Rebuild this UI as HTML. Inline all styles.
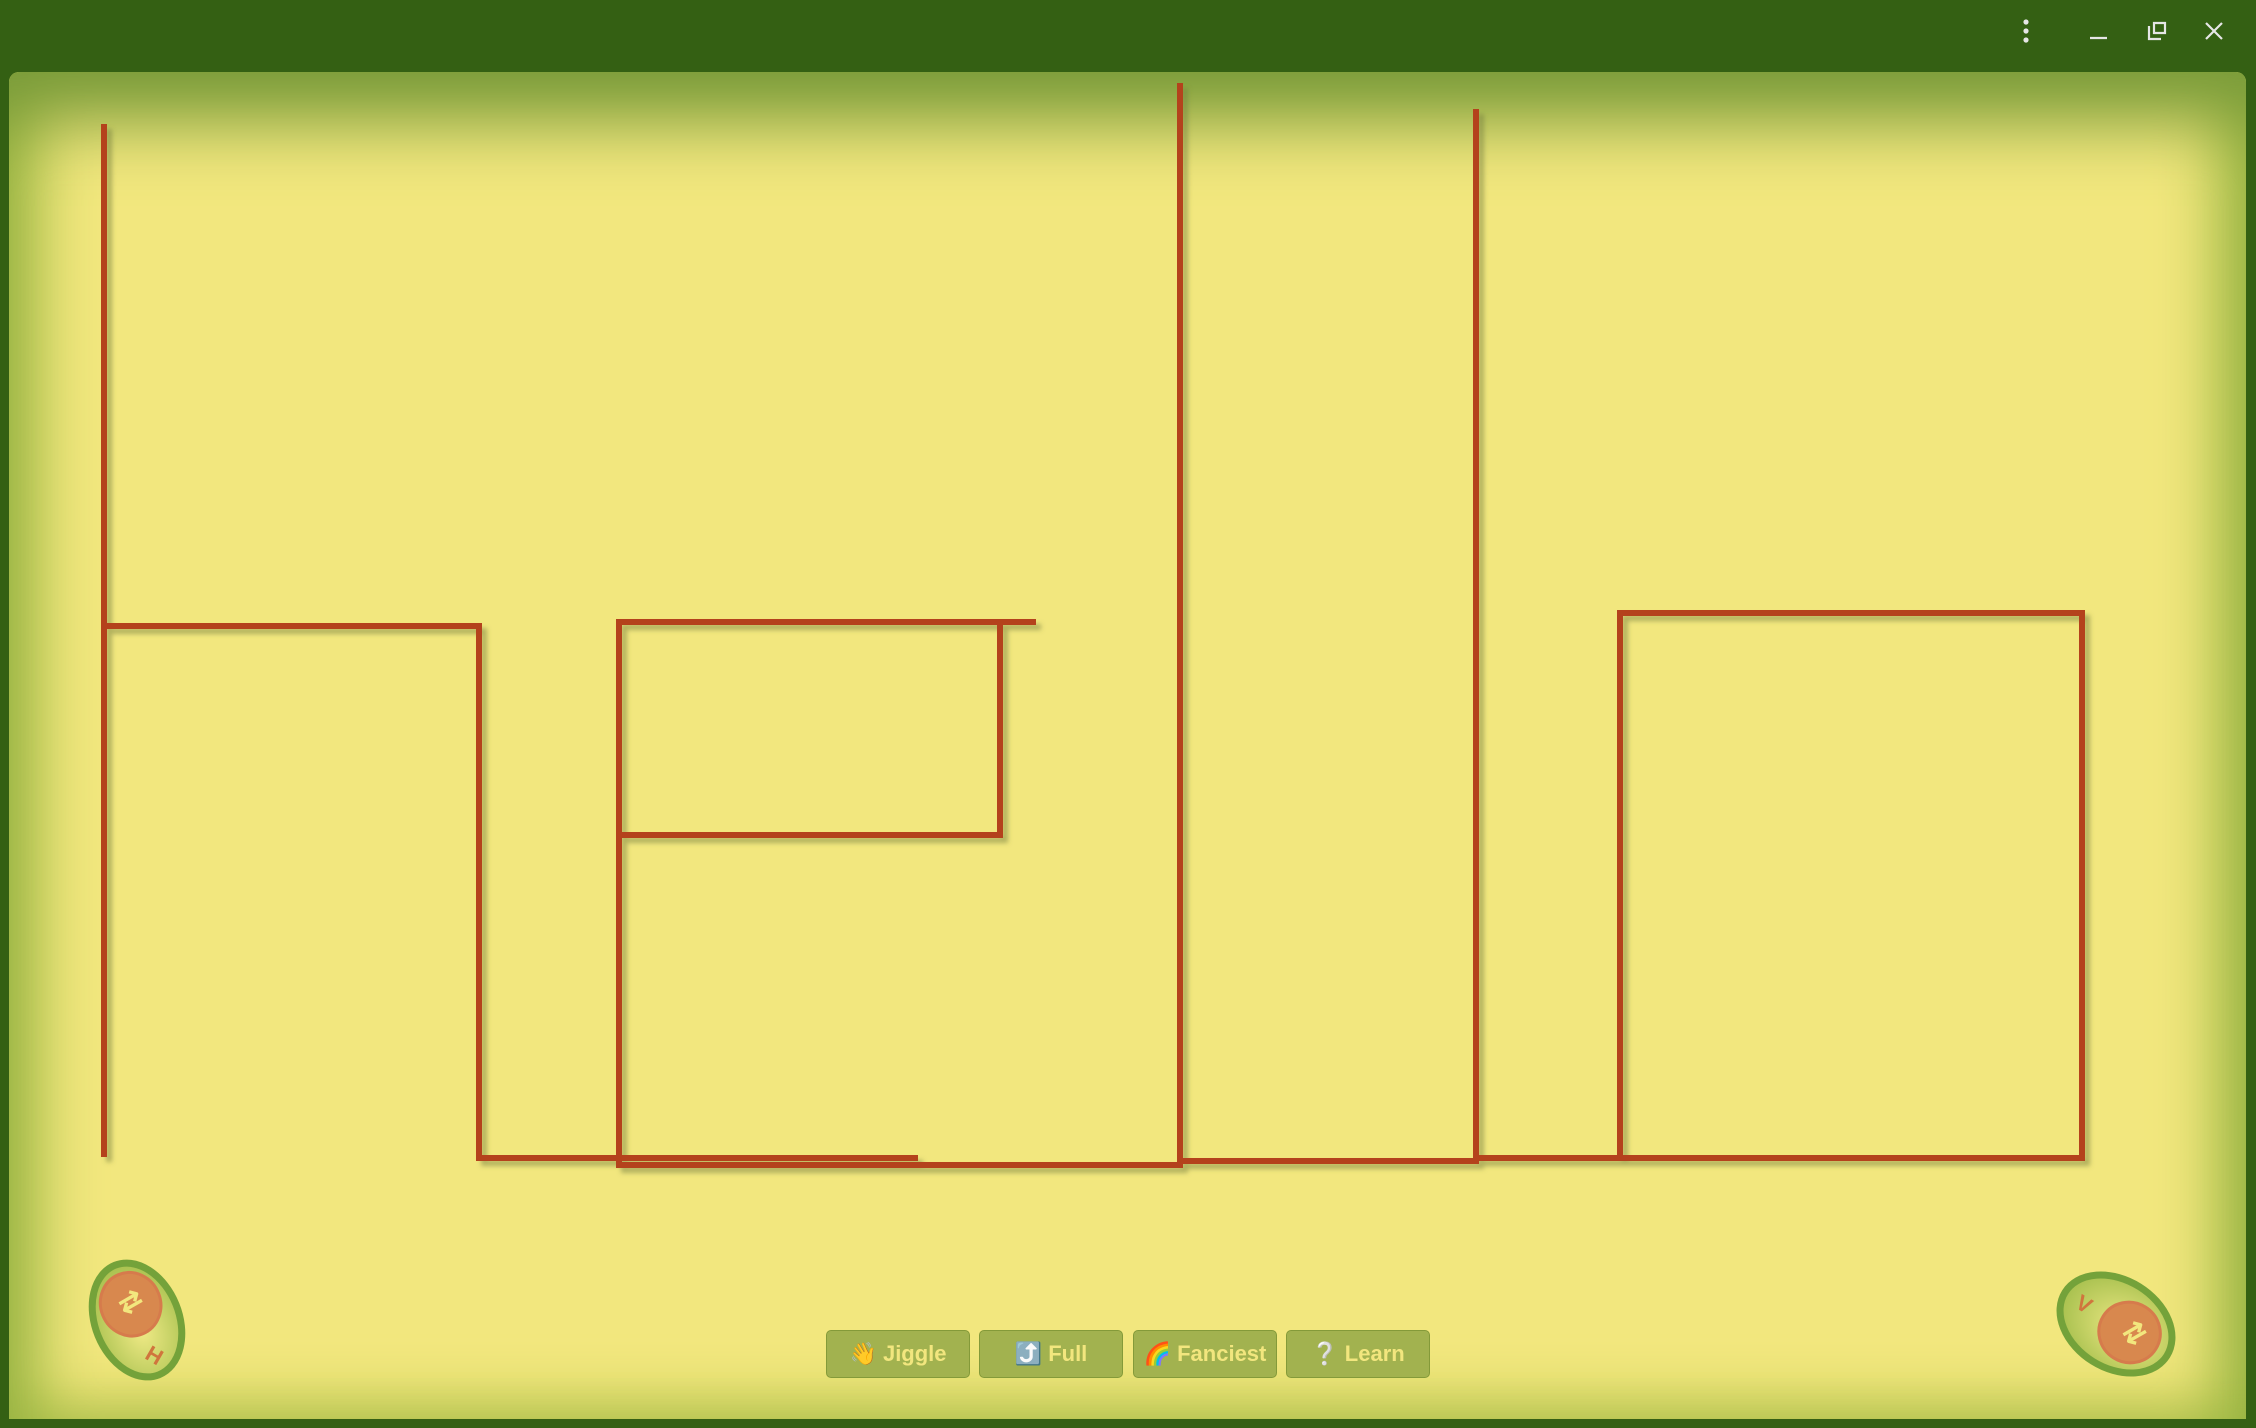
<!DOCTYPE html>
<html><head><meta charset="utf-8"><style>
html,body{margin:0;padding:0;width:2256px;height:1428px;overflow:hidden;background:#346013;font-family:"Liberation Sans",sans-serif}
#c{position:absolute;left:9px;top:72px;width:2237px;height:1347px;background:#f2e77e;border-radius:10px 10px 0 0;overflow:hidden}
#v{position:absolute;inset:0;box-shadow:inset 0 90px 70px -40px #7b9c3a,inset 55px 0 60px -25px #9db845,inset -55px 0 60px -25px #9db845,inset 0 -50px 50px -25px #c9cf5e;pointer-events:none}
svg{position:absolute;left:0;top:0}
.b{position:absolute;top:1330px;height:48px;width:144px;background:#a2b24f;border:1px solid #849a39;border-radius:5px;color:#f2e67e;font-weight:bold;font-size:22px;display:flex;align-items:center;justify-content:center;box-sizing:border-box;white-space:nowrap}
</style></head><body>
<div id="c"><div id="v"></div></div>
<svg width="2256" height="1428">
<defs><filter id="s" x="-5%" y="-5%" width="110%" height="110%"><feDropShadow dx="5" dy="5" stdDeviation="2.5" flood-color="#6f7a3a" flood-opacity="0.5"/></filter>
<radialGradient id="g" cx="50%" cy="60%" r="60%"><stop offset="0" stop-color="#f0ea86"/><stop offset="1" stop-color="#a7c04e"/></radialGradient></defs>
<g stroke="#b4431d" stroke-width="6" fill="none" filter="url(#s)" stroke-linecap="square">
<path d="M104 127V1154M104 626H479V1158H915M619 1165H1180M619 1165V622H1033M1000 622V835H619M1180 86V1165M1180 1161H1476M1476 112V1161M1476 1158H1620M1620 613H2082V1158H1620Z"/>
</g>
<g transform="translate(137,1320) rotate(-22)">
<ellipse cx="0" cy="0" rx="42" ry="59" fill="url(#g)" stroke="#74a23a" stroke-width="7"/>
<ellipse cx="0" cy="-17" rx="30" ry="32" fill="#d8884e" stroke="#d67b4c" stroke-width="3"/>
</g>
<text x="130" y="1311" font-size="28" fill="#f2e77e" font-weight="bold" text-anchor="middle" transform="rotate(-30 130 1301)">⇄</text>
<text x="147" y="1362" font-size="22" fill="#d0753d" font-weight="bold" transform="rotate(30 153 1354)">H</text>
<g transform="translate(2116,1324) rotate(-58)">
<ellipse cx="0" cy="0" rx="44" ry="60" fill="url(#g)" stroke="#74a23a" stroke-width="7"/>
<ellipse cx="0" cy="16" rx="30" ry="31" fill="#d8884e" stroke="#d67b4c" stroke-width="3"/>
</g>
<text x="2134" y="1342" font-size="28" fill="#f2e77e" font-weight="bold" text-anchor="middle" transform="rotate(-30 2134 1332)">⇄</text>
<text x="2078" y="1308" font-size="22" fill="#d0753d" font-weight="bold" transform="rotate(30 2078 1300)">V</text>
<g fill="#e6e6e6"><circle cx="2026" cy="22" r="2.6"/><circle cx="2026" cy="31" r="2.6"/><circle cx="2026" cy="40" r="2.6"/></g>
<g stroke="#e6e6e6" stroke-width="2.2" fill="none"><path d="M2090 38H2107"/><path d="M2149 26V39H2161M2154 23H2165V33H2154Z"/><path d="M2206 23L2222 39M2222 23L2206 39"/></g>
</svg>
<div class="b" style="left:826px">👋 Jiggle</div>
<div class="b" style="left:979px">⤴️ Full</div>
<div class="b" style="left:1133px">🌈 Fanciest</div>
<div class="b" style="left:1286px">❔ Learn</div>
</body></html>
